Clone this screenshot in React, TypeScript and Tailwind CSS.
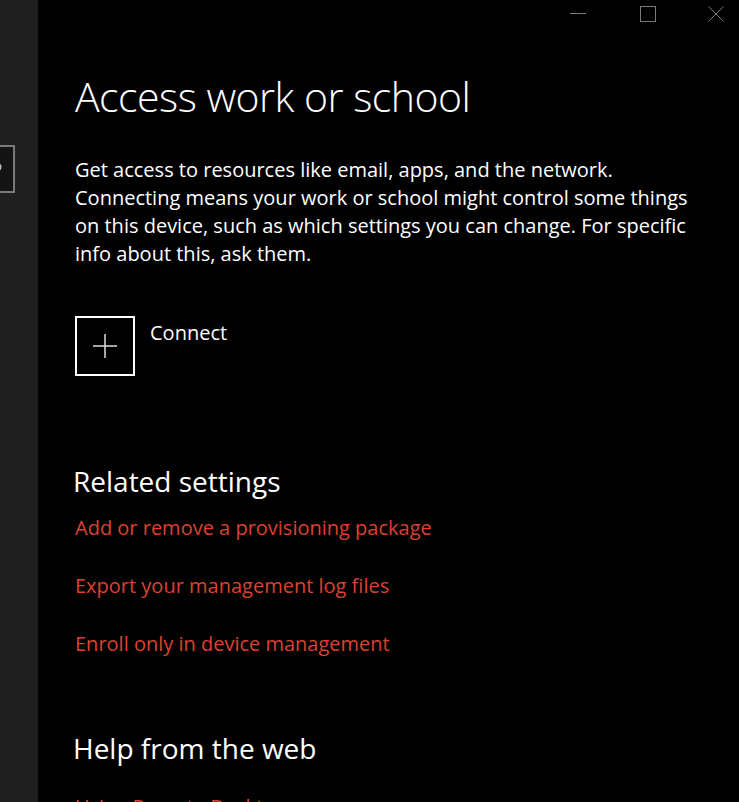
import React from 'react';

const font = { fontFamily: '"Open Sans", "Noto Sans", sans-serif' };

// Window chrome buttons, top right
function WindowControls() {
  return (
    <div className="flex items-start pr-[15px] pt-[6px]">
      <svg width="16" height="16" viewBox="0 0 16 16">
        <path d="M0 7.5h16" stroke="#7a7a7a" strokeWidth="1" />
      </svg>
      <svg className="ml-[54px]" width="16" height="16" viewBox="0 0 16 16">
        <rect x="0.5" y="0.5" width="15" height="15" fill="none" stroke="#7a7a7a" strokeWidth="1" />
      </svg>
      <svg className="ml-[52px]" width="16" height="16" viewBox="0 0 16 16">
        <path d="M0.5 0.5L15.5 15.5M15.5 0.5L0.5 15.5" stroke="#7a7a7a" strokeWidth="1" />
      </svg>
    </div>
  );
}

function RelatedLink({ children, className = '' }: { children: React.ReactNode; className?: string }) {
  return <a className={`block h-[58px] text-[20px] leading-[28px] text-[#dd4030] ${className}`}>{children}</a>;
}

export default function App() {
  return (
    <div className="flex h-[802px] w-[739px] overflow-hidden bg-black text-white" style={font}>
      {/* left nav strip, search box mostly off screen */}
      <div className="w-[38px] shrink-0 bg-[#1f1f1f] pt-[145px]">
        <div className="-ml-[40px] flex h-[48px] w-[55px] items-start justify-end border-2 border-[#7a7a7a] bg-[#141414] pt-[16px] pr-[11px]">
          <svg width="3" height="8" viewBox="0 0 3 8">
            <ellipse cx="0" cy="4" rx="2.5" ry="3.5" fill="#bdbdbd" />
          </svg>
        </div>
      </div>

      <main className="relative flex-1">
        <div className="absolute right-0 top-0">
          <WindowControls />
        </div>

        <div className="pl-[37px] pt-[70px]">
          <h1 className="text-[41px] font-light leading-[52px] tracking-[-0.5px]">Access work or school</h1>

          <p className="mt-[34px] text-[20px] leading-[28px]">
            Get access to resources like email, apps, and the network.
            <br />
            Connecting means your work or school might control some things
            <br />
            on this device, such as which settings you can change. For specific
            <br />
            info about this, ask them.
          </p>

          <button className="mt-[48px] flex items-start gap-[15px]">
            <span className="flex h-[60px] w-[60px] items-center justify-center border-[2.5px] border-white">
              <svg width="26" height="26" viewBox="0 0 26 26">
                <path d="M13 1v24M1 13h24" stroke="#dcdcdc" strokeWidth="1.5" />
              </svg>
            </span>
            <span className="mt-[3px] text-[20px] leading-[28px]">Connect</span>
          </button>

          <h2 className="-ml-[2px] mt-[87px] text-[28px] leading-[36px]">Related settings</h2>
          <div className="mt-[15px]">
            <RelatedLink>Add or remove a provisioning package</RelatedLink>
            <RelatedLink>Export your management log files</RelatedLink>
            <RelatedLink>Enroll only in device management</RelatedLink>
          </div>

          <h2 className="-ml-[2px] mt-[42px] text-[28px] leading-[36px]">Help from the web</h2>
          <RelatedLink className="mt-[27px]">Using Remote Desktop</RelatedLink>
        </div>
      </main>
    </div>
  );
}
